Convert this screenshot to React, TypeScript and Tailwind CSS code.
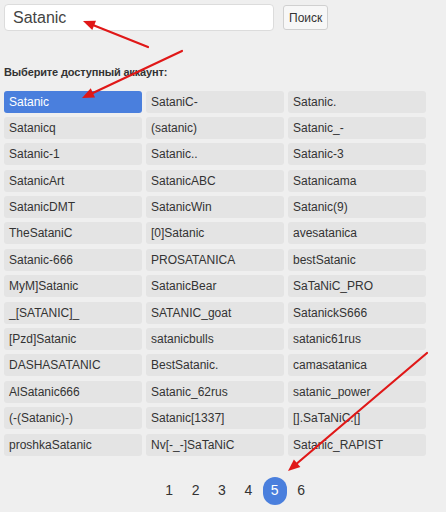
import React from 'react'

const accounts = [
  'Satanic', 'SataniC-', 'Satanic.',
  'Satanicq', '(satanic)', 'Satanic_-',
  'Satanic-1', 'Satanic..', 'Satanic-3',
  'SatanicArt', 'SatanicABC', 'Satanicama',
  'SatanicDMT', 'SatanicWin', 'Satanic(9)',
  'TheSataniC', '[0]Satanic', 'avesatanica',
  'Satanic-666', 'PROSATANICA', 'bestSatanic',
  'MyM]Satanic', 'SatanicBear', 'SaTaNiC_PRO',
  '_[SATANIC]_', 'SATANIC_goat', 'SatanickS666',
  '[Pzd]Satanic', 'satanicbulls', 'satanic61rus',
  'DASHASATANIC', 'BestSatanic.', 'camasatanica',
  'AlSatanic666', 'Satanic_62rus', 'satanic_power',
  '(-(Satanic)-)', 'Satanic[1337]', '[].SaTaNiC.[]',
  'proshkaSatanic', 'Nv[-_-]SaTaNiC', 'Satanic_RAPIST',
]

const Arrow = ({ x1, y1, x2, y2 }: { x1: number; y1: number; x2: number; y2: number }) => {
  const a = Math.atan2(y2 - y1, x2 - x1)
  const len = 12
  const w = 5
  const bx = x2 - len * Math.cos(a)
  const by = y2 - len * Math.sin(a)
  const p1 = `${bx + w * Math.sin(a)},${by - w * Math.cos(a)}`
  const p2 = `${bx - w * Math.sin(a)},${by + w * Math.cos(a)}`
  return (
    <g>
      <line x1={x1} y1={y1} x2={bx} y2={by} stroke="#e01818" strokeWidth={2.2} strokeLinecap="round" />
      <polygon points={`${x2},${y2} ${p1} ${p2}`} fill="#e01818" />
    </g>
  )
}

export default function App() {
  return (
    <div
      className="relative w-[446px] h-[512px] bg-[#efefef] p-[4px] text-[#333]"
      style={{ fontFamily: '"Liberation Sans", Arial, sans-serif' }}
    >
      <div className="flex items-center">
        <div className="w-[270px] h-[27px] bg-white border border-[#dcdcdc] rounded-[4px] flex items-center pl-[8px] text-[16px] text-[#444]">
          Satanic
        </div>
        <button className="ml-[9px] h-[25px] px-[5px] bg-[#f7f7f7] border border-[#d0d0d0] rounded-[3px] text-[12px] text-[#333]">
          Поиск
        </button>
      </div>

      <div className="mt-[33px] text-[11px] font-bold text-[#333] tracking-[-0.15px]">Выберите доступный аккаунт:</div>

      <div className="mt-[10px] grid grid-cols-[138px_138px_138px] gap-x-[4px] gap-y-[4.4px]">
        {accounts.map((name, i) => (
          <div
            key={name}
            className={
              i === 0
                ? 'h-[22px] rounded-[3px] bg-[#4a7fdd] text-white text-[12px] flex items-center pl-[5px]'
                : 'h-[22px] rounded-[3px] bg-[#e4e4e4] text-[#333] text-[12px] flex items-center pl-[5px]'
            }
          >
            {name}
          </div>
        ))}
      </div>

      <div className="mt-[21px] ml-[152px] flex items-center text-[14px] text-[#333]">
        {[1, 2, 3, 4, 5, 6].map((n) => (
          <div key={n} className="w-[26.4px] flex justify-center">
            {n === 5 ? (
              <span className="w-[24px] h-[28px] rounded-full bg-[#4a7fdd] text-white flex items-center justify-center">
                {n}
              </span>
            ) : (
              <span className="h-[28px] flex items-center">{n}</span>
            )}
          </div>
        ))}
      </div>

      <svg className="absolute left-0 top-0 pointer-events-none" width={446} height={512}>
        <Arrow x1={148} y1={47} x2={83} y2={21} />
        <Arrow x1={182} y1={51} x2={82} y2={98} />
        <Arrow x1={427} y1={353} x2={288} y2={471} />
      </svg>
    </div>
  )
}
